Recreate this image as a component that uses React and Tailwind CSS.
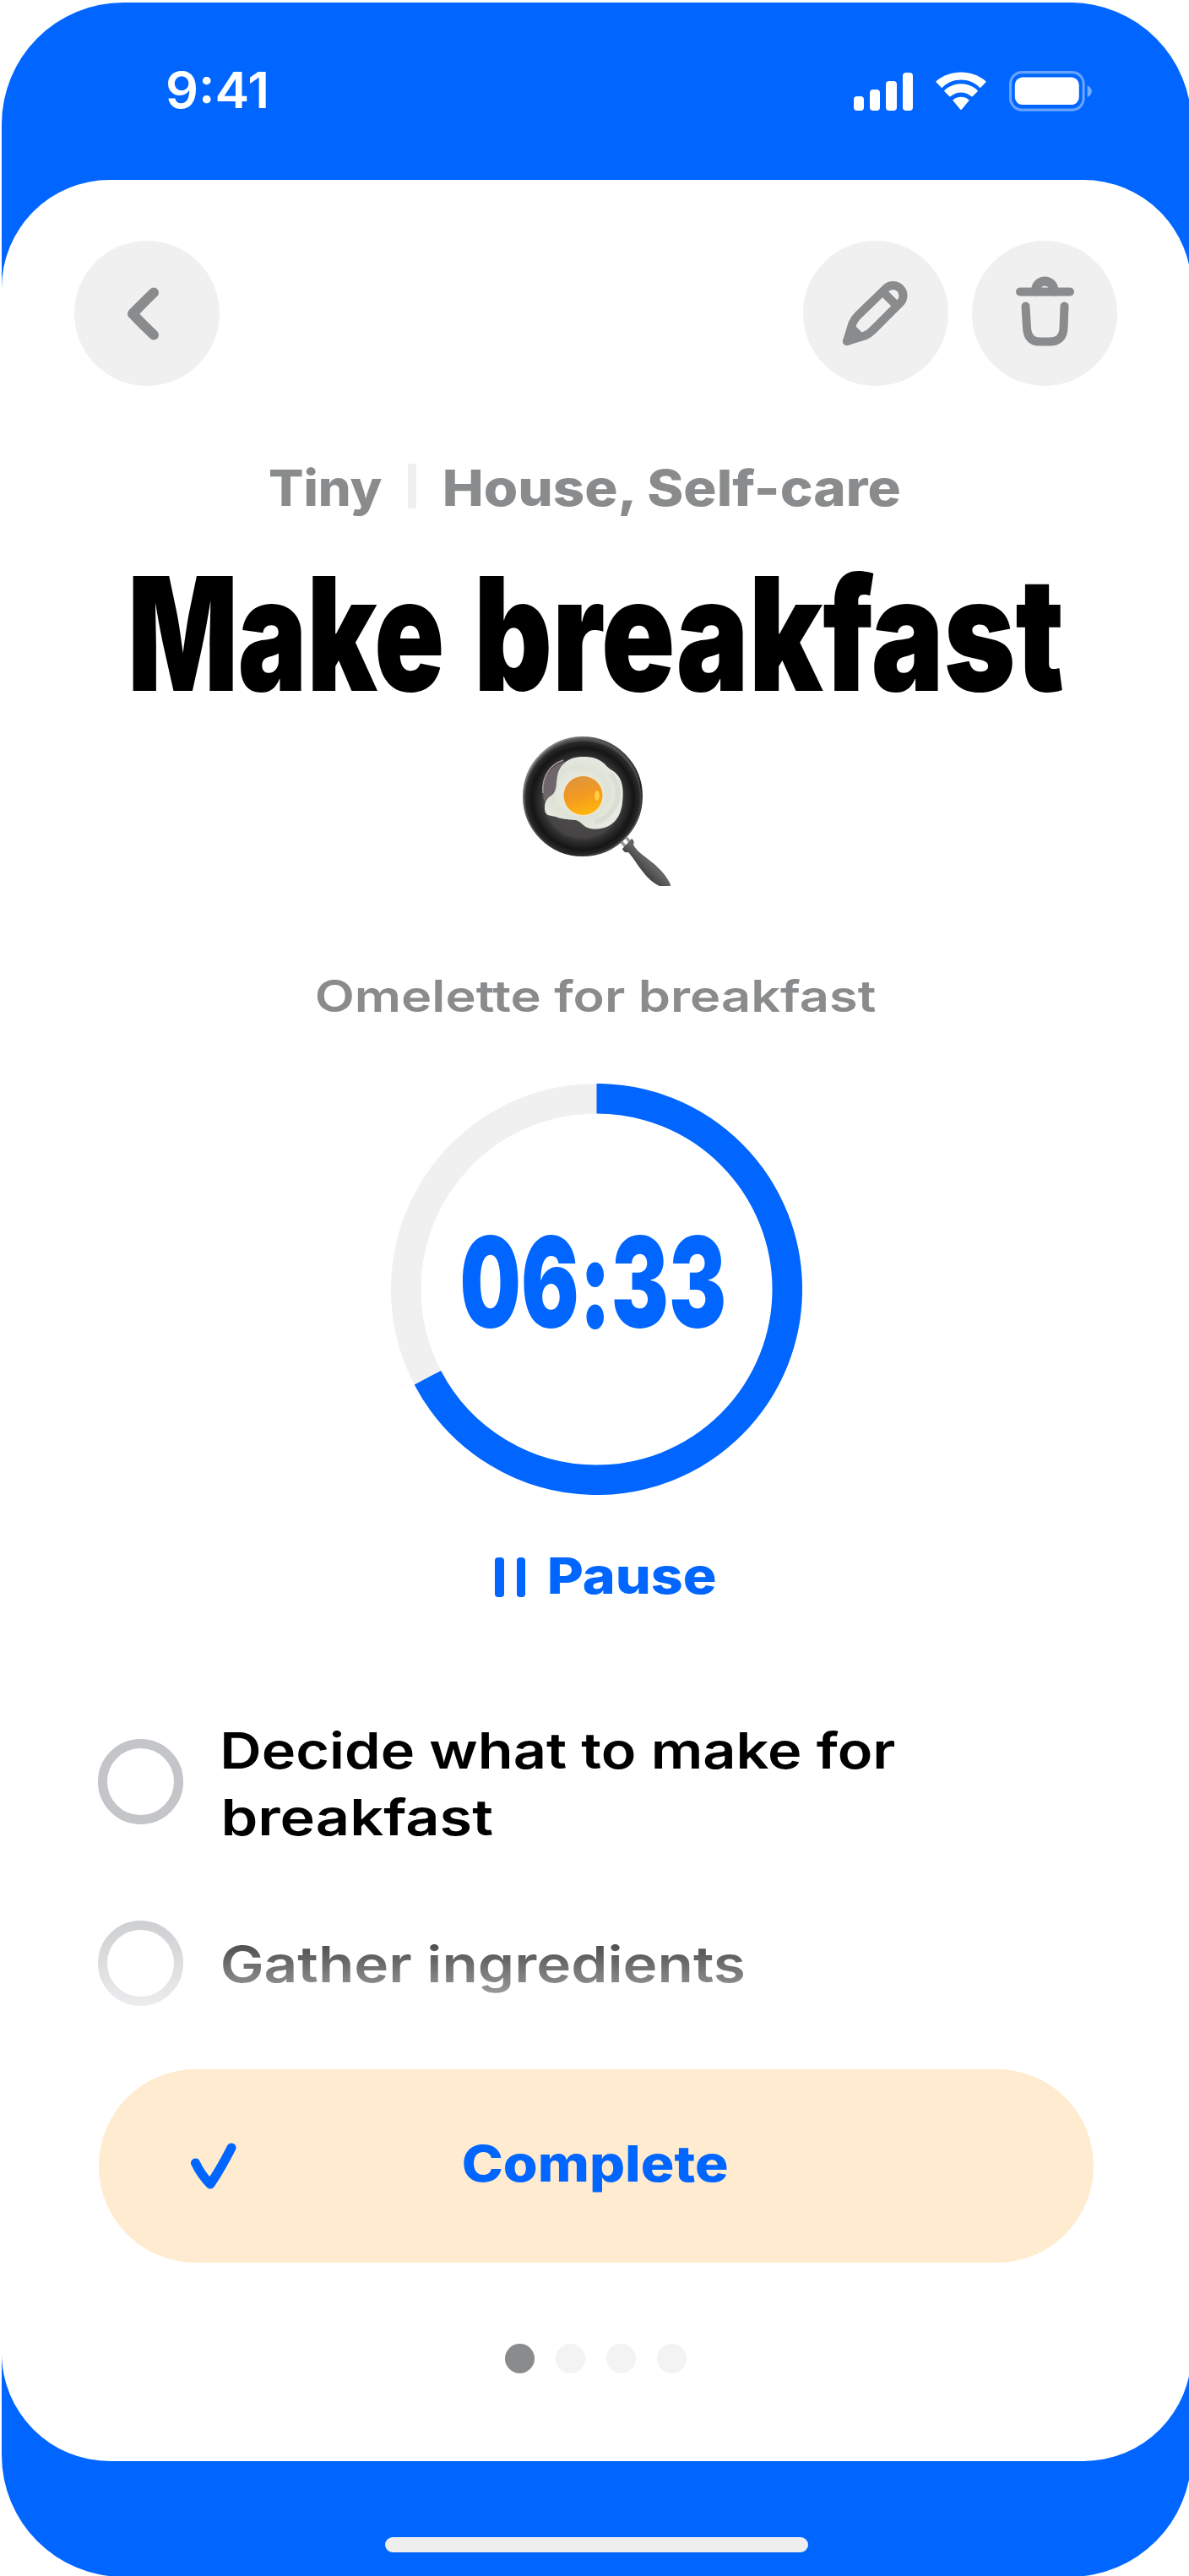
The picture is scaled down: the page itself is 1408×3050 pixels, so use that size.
import { useLayoutEffect, useRef } from "react";

/* Text stretched or condensed horizontally so that its ink fills the width of its box. */
function Fit({ children, className = "" }) {
  const box = useRef(null);
  const ink = useRef(null);
  useLayoutEffect(() => {
    const cs = getComputedStyle(ink.current);
    const ctx = document.createElement("canvas").getContext("2d");
    ctx.font = `${cs.fontWeight} ${cs.fontSize} ${cs.fontFamily}`;
    const m = ctx.measureText(children);
    const left = -m.actualBoundingBoxLeft;
    const width = m.actualBoundingBoxRight - left;
    const k = box.current.clientWidth / width;
    ink.current.style.transform = `scaleX(${k}) translateX(${-left}px)`;
  }, [children]);
  return (
    <span ref={box} className={`block shrink-0 text-left whitespace-nowrap ${className}`}>
      <span ref={ink} className="inline-block origin-left">
        {children}
      </span>
    </span>
  );
}

function StatusBar() {
  return (
    <div className="flex h-[210px] shrink-0 items-center pl-[196px] text-white">
      <Fit className="mb-[2px] w-[117px] text-[59px] leading-[60px] font-semibold">9:41</Fit>
      <div className="ml-[696px] flex items-center">
        <div className="flex h-[45px] items-end gap-[7px]">
          <i className="h-[17px] w-[12.2px] rounded-[4px] bg-white" />
          <i className="h-[25px] w-[12.2px] rounded-[4px] bg-white" />
          <i className="h-[35px] w-[12.2px] rounded-[4px] bg-white" />
          <i className="h-[45px] w-[12.2px] rounded-[4px] bg-white" />
        </div>
        <svg className="ml-[26px] h-[46px] w-[62px]" viewBox="0 0 62 46" fill="#fff">
          <path d="M31 9.6c8.3 0 16 3.2 21.9 8.8.5.4 1.1.4 1.6 0l5.7-5.8c.5-.5.5-1.2 0-1.7C44.1-3.1 17.9-3.1 1.8 10.9c-.5.5-.5 1.2 0 1.7l5.7 5.8c.5.4 1.1.4 1.6 0C15 12.8 22.7 9.6 31 9.6z" />
          <path d="M31 24.4c4.5 0 8.9 1.7 12.2 4.7.5.4 1.1.4 1.6 0l5.6-5.7c.5-.5.5-1.2 0-1.7-10.9-10.1-27.9-10.1-38.8 0-.5.5-.5 1.2 0 1.7l5.6 5.7c.5.4 1.1.4 1.6 0 3.3-3 7.7-4.7 12.2-4.7z" />
          <path d="M40.1 34.6c.5-.5.5-1.2 0-1.6-5.2-4.4-12.9-4.4-18.2 0-.5.4-.5 1.1 0 1.6l8.2 10c.5.6 1.3.6 1.8 0z" />
        </svg>
        <svg className="ml-[25px] h-[48px] w-[100px]" viewBox="0 0 100 48">
          <rect x="2.6" y="1.6" width="86.5" height="44.5" rx="13.5" fill="none" stroke="#fff" strokeOpacity=".4" strokeWidth="3.2" />
          <rect x="7.8" y="7.6" width="76" height="32.5" rx="9" fill="#fff" />
          <path d="M93.6 17v14.2c7-3.4 7-10.8 0-14.2z" fill="#fff" fillOpacity=".45" />
        </svg>
      </div>
    </div>
  );
}

function RoundButton({ label, children }) {
  return (
    <button aria-label={label} className="size-[172px] shrink-0 rounded-full bg-[#f0f0f0] text-[#898b8d]">
      <svg className="size-full" viewBox="0 0 172 172" fill="none" stroke="currentColor" strokeWidth="10" strokeLinecap="round" strokeLinejoin="round">
        {children}
      </svg>
    </button>
  );
}

function Pan() {
  return (
    <svg className="h-[178px] w-[178px]" viewBox="0 0 178 178" role="img" aria-label="Fried egg in a pan">
      <defs>
        <radialGradient id="panBody" cx=".5" cy=".52" r=".5">
          <stop offset="0" stopColor="#555355" />
          <stop offset=".66" stopColor="#454344" />
          <stop offset=".7" stopColor="#353435" />
          <stop offset=".86" stopColor="#151515" />
          <stop offset=".96" stopColor="#2a2a2a" />
          <stop offset="1" stopColor="#555" />
        </radialGradient>
        <linearGradient id="panRim" x1="0" y1="0" x2="1" y2="1">
          <stop offset="0" stopColor="#aaa" />
          <stop offset=".35" stopColor="#555" />
          <stop offset=".7" stopColor="#222" />
          <stop offset="1" stopColor="#777" />
        </linearGradient>
        <radialGradient id="white" cx=".45" cy=".5" r=".6">
          <stop offset="0" stopColor="#f1f2ea" />
          <stop offset=".6" stopColor="#dfe3d7" />
          <stop offset="1" stopColor="#e9ece4" />
        </radialGradient>
        <linearGradient id="yolk" x1=".35" y1="0" x2=".65" y2="1">
          <stop offset="0" stopColor="#dd9540" />
          <stop offset=".5" stopColor="#f39a20" />
          <stop offset="1" stopColor="#ffb90c" />
        </linearGradient>
        <linearGradient id="handle" x1="0" y1="1" x2="1" y2="0">
          <stop offset=".3" stopColor="#333" />
          <stop offset=".55" stopColor="#666" />
          <stop offset=".8" stopColor="#2f2f2f" />
        </linearGradient>
      </defs>
      <path d="M119 126l7 8M125 121l7 9" stroke="#999" strokeWidth="3.5" />
      <path d="M120 134l11-12c3 2 3 5 2 7 6 13 29 20 43 45 3 6-2 9-8 6-22-9-30-30-41-42-4 1-6-1-7-4z" fill="url(#handle)" />
      <circle cx="73" cy="72" r="70" fill="url(#panBody)" stroke="url(#panRim)" strokeWidth="2" />
      <path d="M52 30C30 38 21 56 28 79c5-7 11-10 13-16 2-12 3-24 11-33z" fill="#6e666b" />
      <path d="M26 68c-2-20 9-34 24-39" fill="none" stroke="#a79ea3" strokeWidth="1.5" />
      <path d="M43 48c3-16 15-23 31-23 21 0 24 9 32 15 15 8 16 23 14 40-3 24-20 33-38 30-9-2-10-8-17-10-11-1-17-1-24-4-7-2-13 0-13-11 0-8 4-12 9-15 6-6 4-13 6-22z" fill="url(#white)" />
      <path d="M106 45c12 14 12 32 0 46-5 7-13 10-18 11" fill="none" stroke="#cbd1c5" strokeWidth="6" opacity=".45" />
      <circle cx="73.5" cy="71" r="24" fill="#f8e5c2" />
      <circle cx="73.5" cy="71" r="23" fill="url(#yolk)" />
      <ellipse cx="90" cy="71" rx="3" ry="6" fill="#ffd94a" opacity=".8" />
    </svg>
  );
}

function Timer() {
  const circumference = 2 * Math.PI * 225.8;
  const progress = 0.673;
  return (
    <div className="mt-[73px] ml-[461px] grid size-[487px] shrink-0">
      <svg className="col-start-1 row-start-1 size-full -rotate-90" viewBox="0 0 487 487" fill="none" strokeWidth="35.5">
        <circle cx="243.5" cy="243.5" r="225.8" stroke="#f0f0f0" />
        <circle cx="243.5" cy="243.5" r="225.8" stroke="#0066ff" strokeDasharray={`${circumference * progress} ${circumference}`} />
      </svg>
      <div className="col-start-1 row-start-1 mt-[155px] flex h-[160px] items-center self-start pl-[84.5px] text-[149px] leading-[160px] font-black text-[#0066ff] [font-feature-settings:'calt'_0]">
        <Fit className="w-[309px]">06:33</Fit>
      </div>
    </div>
  );
}

export default function App() {
  return (
    <div className="h-[3050px] w-[1408px] overflow-hidden bg-white pt-[3px] pl-[2px] font-['Inter',sans-serif]">
      <main className="flex h-[3048px] w-[1409px] flex-col rounded-[144px] bg-[#0066ff]">
        <StatusBar />
        <section className="relative flex h-[2701px] shrink-0 flex-col rounded-[128px] bg-white">
          <header className="flex pt-[72px] pr-[88px] pl-[86px]">
            <RoundButton label="Back">
              <path strokeWidth="12" d="M94 61.5C84 71 75 80.5 69 86.5C75 93 84 102 94 111.5" />
            </RoundButton>
            <div className="ml-auto flex gap-[28px]">
              <RoundButton label="Edit">
                <path d="M52 119L58.5 98Q60.5 93 65 88.5L98 56.5A12 12 0 0 1 115 73.5L82 106.5Q78 110.5 73 112.5Z" />
                <path d="M95 61L110 76" />
                <path d="M52 119L60 106L66 112Z" fill="currentColor" />
              </RoundButton>
              <RoundButton label="Delete">
                <path d="M57 60.5H116M63.5 77.5L65 103Q66 119.5 80 119.5H92Q108 119.5 108.5 103L109.5 77.5" />
                <path strokeWidth="11" d="M75.5 60C75.5 44 97 44 97 60" />
              </RoundButton>
            </div>
          </header>

          <div className="mt-[92px] flex h-[60px] pl-[317px] text-[59px] leading-[57px] font-extrabold text-[#898b8d]">
            <Fit className="w-[133px]">Tiny</Fit>
            <i className="mr-[34px] ml-[31px] h-[53px] w-[10px] bg-[#f0f0f0]" />
            <Fit className="w-[541px]">House, Self-care</Fit>
          </div>

          <h1 className="mt-[62px] flex h-[160px] gap-[45px] pl-[155px] text-[187px] leading-[159px] font-black text-black">
            <Fit className="w-[366px]">Make</Fit>
            <Fit className="w-[690px]">breakfast</Fit>
          </h1>

          <div className="mt-[40px] pl-[615px]">
            <Pan />
          </div>

          <p className="mt-[101px] h-[60px] pl-[373px] text-[52px] leading-[59px] font-semibold text-[#898b8d]">
            <Fit className="w-[662px]">Omelette for breakfast</Fit>
          </p>

          <Timer />

          <button className="mt-[67px] flex h-[60px] items-center pl-[584px] text-[59px] leading-[60px] font-extrabold text-[#0066ff]">
            <i className="h-[47px] w-[10.5px] rounded-[4px] bg-current" />
            <i className="mr-[29px] ml-[15px] h-[47px] w-[10.5px] rounded-[4px] bg-current" />
            <Fit className="mb-[2px] w-[196px]">Pause</Fit>
          </button>

          <ul className="mt-[137px] mb-px flex flex-col gap-[82px] pl-[114px] text-[59px] leading-[78.5px] font-semibold text-black">
            <li className="flex h-[157px] items-start gap-[48px]">
              <i className="mt-[25px] size-[101px] rounded-full border-[11px] border-[#c3c5c8]" />
              <span>
                <Fit className="w-[795px]">Decide what to make for</Fit>
                <Fit className="w-[318px]">breakfast</Fit>
              </span>
            </li>
            <li className="flex h-[100px] items-start gap-[46px]">
              <i className="mt-px size-[101px] rounded-full border-[11px] border-[#c3c5c8]" />
              <Fit className="mt-[14px] w-[617px]">Gather ingredients</Fit>
            </li>
          </ul>
          <div className="absolute top-[2027px] right-0 left-0 h-[200px] bg-linear-to-b from-white/0 to-white" />

          <button className="mt-[76px] ml-[115px] flex h-[229px] w-[1178px] shrink-0 items-center rounded-full bg-[#ffebcf] pl-[109px] text-[59px] leading-[60px] font-extrabold text-[#0066ff]">
            <svg className="mr-[269px] h-[56px] w-[54px] shrink-0" viewBox="0 0 54 56" fill="none" stroke="currentColor" strokeWidth="11" strokeLinecap="round" strokeLinejoin="round">
              <path d="M5.5 24Q12 38 23 49Q33 35 48 6" />
            </svg>
            <Fit className="mb-[5px] w-[312px]">Complete</Fit>
          </button>

          <div className="mt-[96px] flex gap-[25.5px] pl-[596px]">
            <i className="size-[34.5px] rounded-full bg-[#898b8d]" />
            <i className="size-[34.5px] rounded-full bg-[#f3f3f3]" />
            <i className="size-[34.5px] rounded-full bg-[#f3f3f3]" />
            <i className="size-[34.5px] rounded-full bg-[#f3f3f3]" />
          </div>
        </section>
        <div className="mt-[90px] ml-[454px] h-[18px] w-[501px] shrink-0 rounded-full bg-[#eeeeee]" />
      </main>
    </div>
  );
}
